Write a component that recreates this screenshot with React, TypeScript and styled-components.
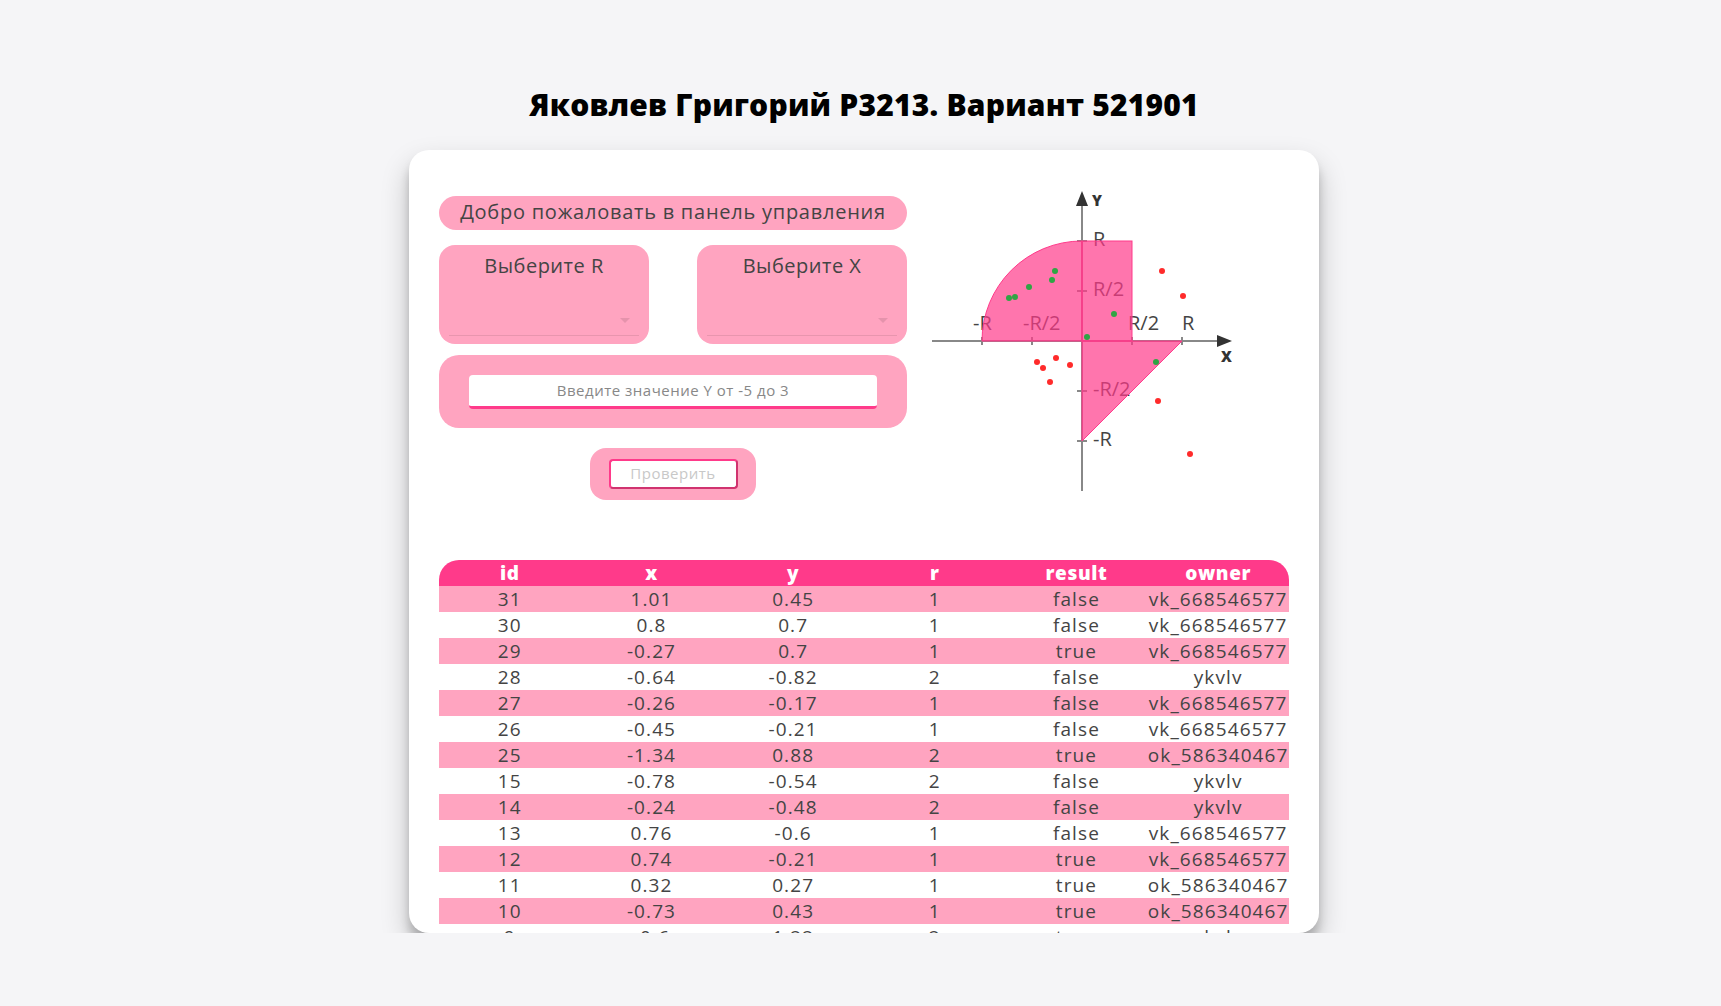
import styled, { createGlobalStyle } from "styled-components";

const GlobalStyle = createGlobalStyle`
  body {
    margin: 0;
    background: #f5f5f7;
    font-family: "Open Sans", "Noto Sans", sans-serif;
    color: #444;
  }
`;

const Page = styled.div`
  display: flex;
  flex-direction: column;
  align-items: center;
  padding: 85px 0 0 7px;
`;

const Title = styled.h1`
  margin: 0 0 25px;
  font-size: 30px;
  line-height: 40px;
  font-weight: 800;
  color: #000;
  letter-spacing: 0.2px;
`;

const Card = styled.div`
  width: 910px;
  height: 783px;
  box-sizing: border-box;
  padding: 41px 30px 0;
  background: #fff;
  border-radius: 20px;
  box-shadow: 0 14px 28px rgba(0, 0, 0, 0.22), 0 10px 10px rgba(0, 0, 0, 0.18);
  overflow: hidden;
  display: flex;
  flex-direction: column;
`;

const Top = styled.div`
  display: grid;
  grid-template-columns: 468px 300px;
  column-gap: 25px;
  align-items: start;
  margin-bottom: 60px;
`;

const Controls = styled.div`
  display: flex;
  flex-direction: column;
  padding-top: 5px;
`;

const Welcome = styled.div`
  height: 34px;
  box-sizing: border-box;
  padding-bottom: 3px;
  border-radius: 17px;
  background: #ffa4c0;
  display: flex;
  align-items: center;
  justify-content: center;
  font-size: 20px;
  letter-spacing: 0.75px;
  color: #444;
  margin-bottom: 15px;
`;

const SelectRow = styled.div`
  display: flex;
  justify-content: space-between;
  margin-bottom: 11px;
`;

const SelectBox = styled.div`
  width: 210px;
  height: 99px;
  box-sizing: border-box;
  border-radius: 16px;
  background: #ffa4c0;
  padding: 7px 10px 0;
  display: flex;
  flex-direction: column;
`;

const SelectLabel = styled.div`
  text-align: center;
  font-size: 20px;
  line-height: 28px;
  letter-spacing: 0.5px;
  color: #444;
`;

const SelectField = styled.div`
  position: relative;
  height: 55px;
  border-bottom: 1px solid rgba(0, 0, 0, 0.09);
`;

const Caret = styled.span`
  position: absolute;
  right: 9px;
  top: 38px;
  width: 0;
  height: 0;
  border-left: 5px solid transparent;
  border-right: 5px solid transparent;
  border-top: 5px solid rgba(0, 0, 0, 0.1);
`;

const YBox = styled.div`
  height: 73px;
  box-sizing: border-box;
  border-radius: 20px;
  background: #ffa4c0;
  padding: 20px 30px 0;
  margin-bottom: 20px;
`;

const YInput = styled.input`
  display: block;
  width: 100%;
  height: 34px;
  box-sizing: border-box;
  padding: 0 0 2px;
  border: none;
  border-bottom: 3px solid #ff3a8a;
  border-radius: 4px;
  background: #fff;
  text-align: center;
  font-family: inherit;
  font-size: 15px;
  letter-spacing: 0.5px;
  outline: none;
  &::placeholder {
    color: #888;
  }
`;

const ButtonWrap = styled.div`
  align-self: center;
  width: 166px;
  height: 52px;
  border-radius: 16px;
  background: #ffa4c0;
  display: flex;
  align-items: center;
  justify-content: center;
`;

const CheckButton = styled.button`
  width: 129px;
  height: 30px;
  box-sizing: border-box;
  padding: 0 0 3px;
  border: 2px solid #ff3a8a;
  border-right-color: #d0336f;
  border-bottom-color: #d0336f;
  border-radius: 4px;
  background: #fff;
  color: #c8c8c8;
  font-family: inherit;
  font-size: 15px;
  letter-spacing: 0.5px;
`;

const TableWrap = styled.div`
  flex: 1;
  overflow: hidden;
  border-radius: 20px 20px 0 0;
`;

const Table = styled.table`
  width: 100%;
  table-layout: fixed;
  border-collapse: collapse;
  font-size: 19px;
  letter-spacing: 1.1px;
`;

const Th = styled.th`
  height: 26px;
  padding: 0;
  background: #ff3a8a;
  color: #fff;
  font-weight: 800;
  font-size: 19px;
  line-height: 26px;
  letter-spacing: 0.6px;
`;

const Tr = styled.tr<{ $pink: boolean }>`
  background: ${(p) => (p.$pink ? "#ffa4c0" : "#fff")};
`;

const Td = styled.td`
  height: 26px;
  padding: 0;
  text-align: center;
  white-space: nowrap;
  line-height: 26px;
  color: #444;
`;

interface IRow {
  id: number;
  x: number;
  y: number;
  r: number;
  result: boolean;
  owner: string;
}

const rows: IRow[] = [
  { id: 31, x: 1.01, y: 0.45, r: 1, result: false, owner: "vk_668546577" },
  { id: 30, x: 0.8, y: 0.7, r: 1, result: false, owner: "vk_668546577" },
  { id: 29, x: -0.27, y: 0.7, r: 1, result: true, owner: "vk_668546577" },
  { id: 28, x: -0.64, y: -0.82, r: 2, result: false, owner: "ykvlv" },
  { id: 27, x: -0.26, y: -0.17, r: 1, result: false, owner: "vk_668546577" },
  { id: 26, x: -0.45, y: -0.21, r: 1, result: false, owner: "vk_668546577" },
  { id: 25, x: -1.34, y: 0.88, r: 2, result: true, owner: "ok_586340467" },
  { id: 15, x: -0.78, y: -0.54, r: 2, result: false, owner: "ykvlv" },
  { id: 14, x: -0.24, y: -0.48, r: 2, result: false, owner: "ykvlv" },
  { id: 13, x: 0.76, y: -0.6, r: 1, result: false, owner: "vk_668546577" },
  { id: 12, x: 0.74, y: -0.21, r: 1, result: true, owner: "vk_668546577" },
  { id: 11, x: 0.32, y: 0.27, r: 1, result: true, owner: "ok_586340467" },
  { id: 10, x: -0.73, y: 0.43, r: 1, result: true, owner: "ok_586340467" },
  { id: 9, x: -0.6, y: 1.22, r: 2, result: true, owner: "ykvlv" },
  { id: 8, x: -1.06, y: 1.08, r: 2, result: true, owner: "ykvlv" },
  { id: 7, x: 0.05, y: 0.04, r: 1, result: true, owner: "ykvlv" },
  { id: 6, x: 1.08, y: -1.13, r: 1, result: false, owner: "ykvlv" },
];

const AxisText = styled.text`
  font-family: "Open Sans", "Noto Sans", sans-serif;
  font-size: 20px;
  fill: #444;
`;

const AxisName = styled.text`
  font-family: "Open Sans", "Noto Sans", sans-serif;
  font-size: 15px;
  font-weight: 800;
  fill: #333;
`;

function Graph() {
  const ticks = [50, 100, 200, 250];
  return (
    <svg width="300" height="300" viewBox="0 0 300 300">
      <line x1="0" y1="150" x2="290" y2="150" stroke="#888" strokeWidth="2" />
      <line x1="150" y1="10" x2="150" y2="300" stroke="#888" strokeWidth="2" />
      <polygon points="300,150 285,144 285,156" fill="#333" />
      <polygon points="150,0 144,15 156,15" fill="#333" />
      {ticks.map((t) => (
        <g key={t}>
          <line x1={t} y1="146" x2={t} y2="154" stroke="#888" strokeWidth="2" />
          <line x1="145" y1={t} x2="155" y2={t} stroke="#888" strokeWidth="2" />
        </g>
      ))}
      <AxisText x="41" y="139">-R</AxisText>
      <AxisText x="91" y="139">-R/2</AxisText>
      <AxisText x="196" y="139">R/2</AxisText>
      <AxisText x="250" y="139">R</AxisText>
      <AxisText x="161" y="55">R</AxisText>
      <AxisText x="161" y="105">R/2</AxisText>
      <AxisText x="161" y="205">-R/2</AxisText>
      <AxisText x="161" y="255">-R</AxisText>
      <AxisName x="160" y="15">Y</AxisName>
      <AxisName x="289" y="171">X</AxisName>
      <g fill="#ff3a8a" stroke="#ff3a8a" fillOpacity="0.7" strokeWidth="1">
        <path d="M150,150 L50,150 A100,100 0 0,1 150,50 Z" />
        <rect x="150" y="50" width="50" height="100" />
        <polygon points="150,150 250,150 150,250" />
      </g>
      {rows.map((row) => (
        <circle
          key={row.id}
          cx={150 + (row.x / row.r) * 100}
          cy={150 - (row.y / row.r) * 100}
          r="3"
          fill={row.result ? "#2fa544" : "#ff2b2b"}
        />
      ))}
    </svg>
  );
}

export default function App() {
  const columns = ["id", "x", "y", "r", "result", "owner"];
  return (
    <>
      <GlobalStyle />
      <Page>
        <Title>Яковлев Григорий P3213. Вариант 521901</Title>
        <Card>
          <Top>
            <Controls>
              <Welcome>Добро пожаловать в панель управления</Welcome>
              <SelectRow>
                <SelectBox>
                  <SelectLabel>Выберите R</SelectLabel>
                  <SelectField>
                    <Caret />
                  </SelectField>
                </SelectBox>
                <SelectBox>
                  <SelectLabel>Выберите X</SelectLabel>
                  <SelectField>
                    <Caret />
                  </SelectField>
                </SelectBox>
              </SelectRow>
              <YBox>
                <YInput placeholder="Введите значение Y от -5 до 3" />
              </YBox>
              <ButtonWrap>
                <CheckButton disabled>Проверить</CheckButton>
              </ButtonWrap>
            </Controls>
            <Graph />
          </Top>
          <TableWrap>
            <Table>
              <thead>
                <tr>
                  {columns.map((c) => (
                    <Th key={c}>{c}</Th>
                  ))}
                </tr>
              </thead>
              <tbody>
                {rows.map((row, i) => (
                  <Tr key={row.id} $pink={i % 2 === 0}>
                    <Td>{row.id}</Td>
                    <Td>{row.x}</Td>
                    <Td>{row.y}</Td>
                    <Td>{row.r}</Td>
                    <Td>{String(row.result)}</Td>
                    <Td>{row.owner}</Td>
                  </Tr>
                ))}
              </tbody>
            </Table>
          </TableWrap>
        </Card>
      </Page>
    </>
  );
}
